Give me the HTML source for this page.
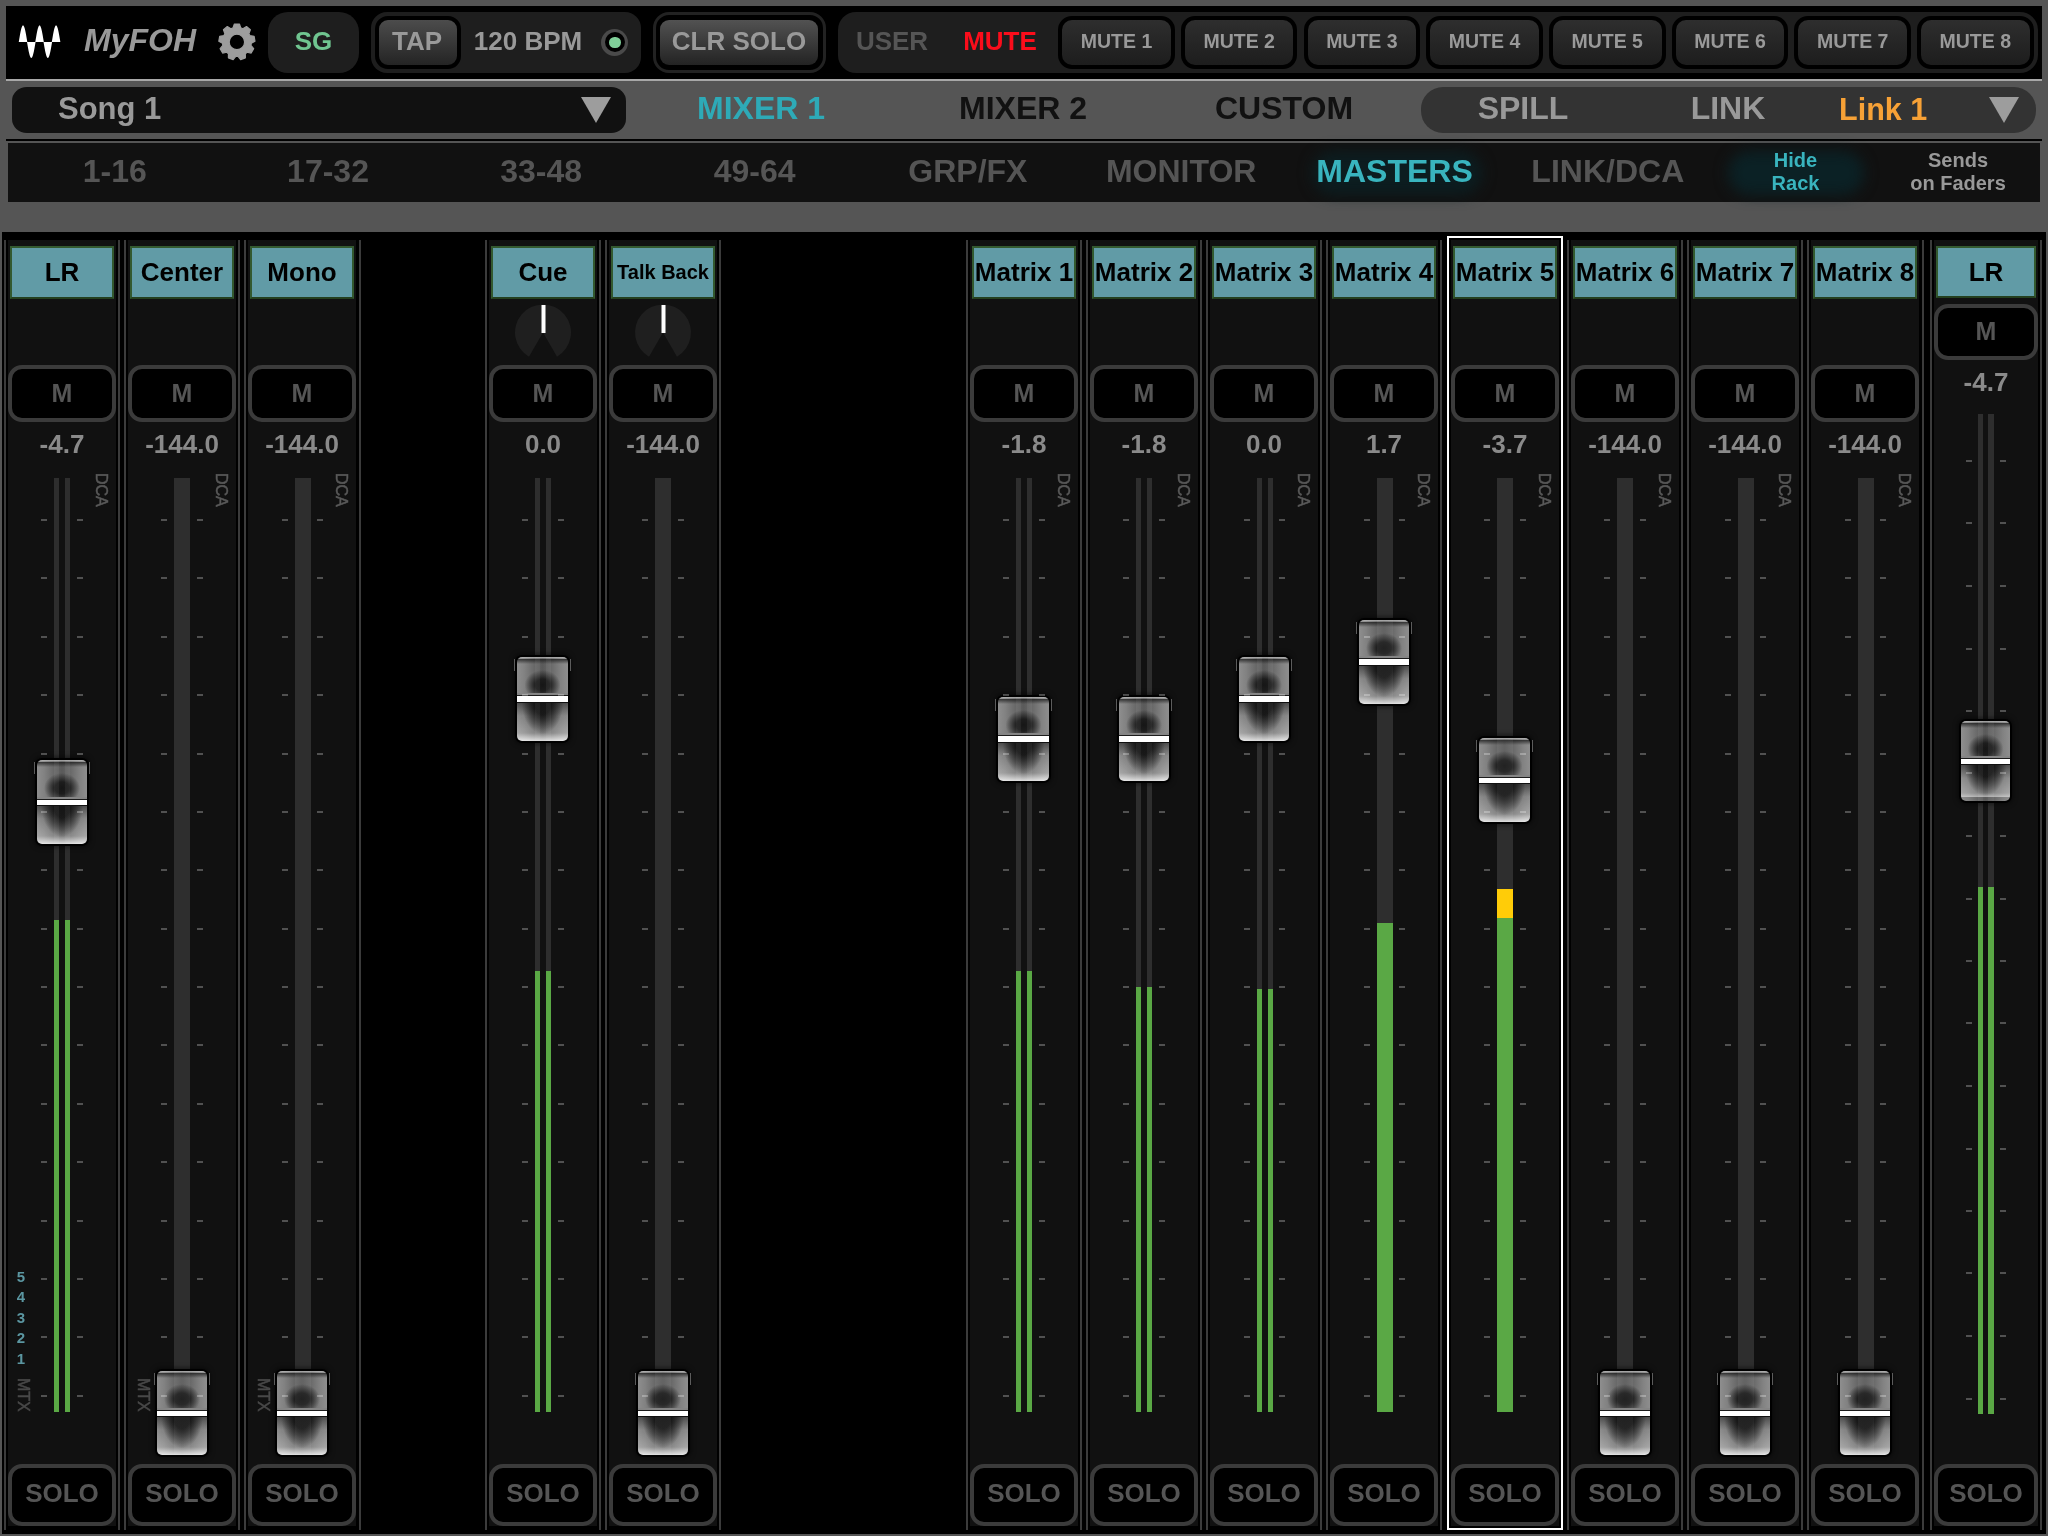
<!DOCTYPE html>
<html><head><meta charset="utf-8"><title>MyFOH</title>
<style>
html,body{margin:0;padding:0;overflow:hidden;}
html{width:2048px;height:1536px;background:#555555;}
body{width:2048px;height:1536px;background:#555555;position:relative;overflow:hidden;
 font-family:"Liberation Sans",sans-serif;font-weight:bold;}
div{position:absolute;box-sizing:border-box;}
svg{position:absolute;overflow:visible;}
.t{text-align:center;white-space:nowrap;}
.ln{background:#3b3b3b;width:2px;top:240px;height:1290px;}
.bg{background:#111111;top:240px;height:1286px;}
.lab{background:#619ba6;border:2px solid #33592f;border-bottom-color:#24401f;color:#000;text-align:center;
 height:53px;top:246px;line-height:49px;font-size:26px;white-space:nowrap;overflow:hidden;}
.btn{background:#000;border:4px solid #3b3b3b;border-radius:14px;color:#555;text-align:center;font-size:25px;}
.val{color:#8a8a8a;font-size:26px;text-align:center;height:30px;line-height:30px;}
.tk{background:rgba(255,255,255,.27);width:6px;height:2px;}
.tr{background:#2e2e2e;}
.gr{background:#5aa845;}
.yl{background:#ffcc08;}
.dca{color:#595959;font-size:16px;font-weight:normal;-webkit-text-stroke:.5px #595959;transform:rotate(90deg);transform-origin:0 0;
 white-space:nowrap;height:18px;line-height:18px;}
.num{color:#5b96a1;font-size:15px;text-align:center;width:20px;height:18px;line-height:18px;}
.knob{width:50px;height:84px;border-radius:5px;
 box-shadow:0 0 0 2px #000,0 0 5px 3px rgba(0,0,0,.55);
 background:
  linear-gradient(to bottom,rgba(190,190,190,.9),rgba(60,60,60,.0)) 0 0/100% 2px no-repeat,
  linear-gradient(to bottom,rgba(20,20,20,.75),rgba(20,20,20,0)) 0 2px/100% 5px no-repeat,
  radial-gradient(ellipse 18px 15px at 50% 28px,rgba(22,22,22,1) 0%,rgba(22,22,22,.9) 40%,rgba(22,22,22,0) 100%) 0 0/100% 37px no-repeat,
  linear-gradient(to bottom,rgba(20,20,20,.55),rgba(20,20,20,0)) 0 45px/100% 14px no-repeat,
  radial-gradient(ellipse 21px 32px at 50% 0px,rgba(22,22,22,1) 0%,rgba(22,22,22,.95) 40%,rgba(22,22,22,0) 100%) 0 45px/100% 39px no-repeat,
  linear-gradient(to bottom,rgba(255,255,255,0) 0,rgba(255,255,255,0) 60px,rgba(255,255,255,.22) 76px,rgba(255,255,255,.8) 84px),
  linear-gradient(to right,#8e8e8e 0,#828282 14%,#686868 34%,#5a5a5a 50%,#686868 66%,#828282 86%,#8e8e8e 100%);
}
.bd{top:0;height:100%;background:rgba(255,255,255,.055);}
.kl{left:0;width:100%;background:#fff;box-shadow:0 -1px 0 #1c1c1c,0 -3px 0 #858585,0 1px 0 #111;}
.ear{background:#5c5c5c;width:1px;height:12px;}
</style></head>
<body>
<div id="root" style="left:0;top:0;width:2048px;height:1536px;overflow:hidden;will-change:transform;">

<div style="left:6px;top:6px;width:2036px;height:73px;background:#000;"></div>
<div style="left:6px;top:79px;width:2036px;height:2px;background:#a8a8a8;"></div>
<svg style="left:0;top:0" width="80" height="80" viewBox="0 0 80 80"><path d="M18.75 42.05 L19.18 39.45 L19.61 36.90 L20.03 34.49 L20.46 32.26 L20.89 30.28 L21.32 28.58 L21.75 27.21 L22.17 26.21 L22.60 25.60 L23.03 25.40 L23.46 25.60 L23.89 26.21 L24.31 27.21 L24.74 28.58 L25.17 30.28 L25.60 32.26 L26.03 34.49 L26.45 36.90 L26.88 39.45 L27.31 42.05ZM27.01 41.95 L27.44 44.46 L27.87 46.91 L28.29 49.24 L28.72 51.38 L29.15 53.30 L29.58 54.93 L30.01 56.25 L30.43 57.21 L30.86 57.80 L31.29 58.00 L31.72 57.80 L32.15 57.21 L32.57 56.25 L33.00 54.93 L33.43 53.30 L33.86 51.38 L34.29 49.24 L34.71 46.91 L35.14 44.46 L35.57 41.95ZM35.27 42.05 L35.70 39.45 L36.13 36.90 L36.55 34.49 L36.98 32.26 L37.41 30.28 L37.84 28.58 L38.27 27.21 L38.69 26.21 L39.12 25.60 L39.55 25.40 L39.98 25.60 L40.41 26.21 L40.83 27.21 L41.26 28.58 L41.69 30.28 L42.12 32.26 L42.55 34.49 L42.97 36.90 L43.40 39.45 L43.83 42.05ZM43.53 41.95 L43.96 44.46 L44.39 46.91 L44.81 49.24 L45.24 51.38 L45.67 53.30 L46.10 54.93 L46.53 56.25 L46.95 57.21 L47.38 57.80 L47.81 58.00 L48.24 57.80 L48.67 57.21 L49.09 56.25 L49.52 54.93 L49.95 53.30 L50.38 51.38 L50.81 49.24 L51.23 46.91 L51.66 44.46 L52.09 41.95ZM51.79 42.05 L52.22 39.45 L52.65 36.90 L53.07 34.49 L53.50 32.26 L53.93 30.28 L54.36 28.58 L54.79 27.21 L55.21 26.21 L55.64 25.60 L56.07 25.40 L56.50 25.60 L56.93 26.21 L57.35 27.21 L57.78 28.58 L58.21 30.28 L58.64 32.26 L59.07 34.49 L59.49 36.90 L59.92 39.45 L60.35 42.05Z" fill="#fff"/></svg>
<div style="left:84px;top:20px;height:40px;line-height:40px;font-size:32px;font-style:italic;color:#999;white-space:nowrap;">MyFOH</div>
<svg style="left:0;top:0" width="300" height="80"><path d="M233.00 27.93 L234.38 23.98 L239.42 23.98 L240.80 27.93 L242.89 28.70 L246.49 26.55 L250.35 29.79 L248.86 33.71 L249.98 35.63 L254.11 36.31 L254.99 41.27 L251.33 43.31 L250.94 45.51 L253.68 48.68 L251.16 53.04 L247.05 52.26 L245.34 53.69 L245.40 57.88 L240.66 59.60 L238.01 56.36 L235.79 56.36 L233.14 59.60 L228.40 57.88 L228.46 53.69 L226.75 52.26 L222.64 53.04 L220.12 48.68 L222.86 45.51 L222.47 43.31 L218.81 41.27 L219.69 36.31 L223.82 35.63 L224.94 33.71 L223.45 29.79 L227.31 26.55 L230.91 28.70Z M229.20 41.90 a7.7 7.7 0 1 0 15.4 0 a7.7 7.7 0 1 0 -15.4 0Z" fill="#9d9d9d" fill-rule="evenodd" stroke="#9d9d9d" stroke-width="1.2" stroke-linejoin="round"/></svg>
<div style="left:268px;top:12px;width:91px;height:61px;background:#1e1e1e;border-radius:20px;"></div>
<div class="t" style="left:113.5px;top:23.0px;width:400px;height:36px;line-height:36px;font-size:26px;color:#70c590;">SG</div>
<div style="left:371px;top:12px;width:270px;height:61px;background:#1e1e1e;border-radius:16px;"></div>
<div style="left:375px;top:16px;width:86px;height:53px;background:linear-gradient(#4c4c4c,#242424);border:4px solid #000;border-radius:13px;"></div>
<div class="t" style="left:217.0px;top:23.0px;width:400px;height:36px;line-height:36px;font-size:26px;color:#999;">TAP</div>
<div class="t" style="left:328.0px;top:23.0px;width:400px;height:36px;line-height:36px;font-size:26px;color:#999;">120 BPM</div>
<div style="left:601.4px;top:28.7px;width:27px;height:27px;border-radius:50%;background:#4a4a4a;"></div>
<div style="left:604.9px;top:32.2px;width:20px;height:20px;border-radius:50%;background:#000;"></div>
<div style="left:609.2px;top:36.5px;width:11.4px;height:11.4px;border-radius:50%;background:#80cf99;"></div>
<div style="left:653px;top:12px;width:173px;height:61px;border:3px solid #222;border-radius:16px;background:#000;"></div>
<div style="left:660px;top:20px;width:158px;height:45px;background:linear-gradient(#525252,#232323);border-radius:9px;"></div>
<div class="t" style="left:539.0px;top:23.0px;width:400px;height:36px;line-height:36px;font-size:26px;color:#999;">CLR SOLO</div>
<div style="left:838px;top:12px;width:1200px;height:61px;background:#1e1e1e;border-radius:18px;"></div>
<div class="t" style="left:692.0px;top:23.0px;width:400px;height:36px;line-height:36px;font-size:26px;color:#555;">USER</div>
<div class="t" style="left:800.0px;top:23.0px;width:400px;height:36px;line-height:36px;font-size:26px;color:#fb0d1b;">MUTE</div>
<div style="left:1058.2px;top:16px;width:116.5px;height:53px;background:linear-gradient(#2e2e2e,#1d1d1d);border:4px solid #000;border-radius:14px;"></div>
<div class="t" style="left:1058.5px;top:28.0px;width:116px;height:27px;line-height:27px;font-size:19.5px;color:#999;">MUTE 1</div>
<div style="left:1180.9px;top:16px;width:116.5px;height:53px;background:linear-gradient(#2e2e2e,#1d1d1d);border:4px solid #000;border-radius:14px;"></div>
<div class="t" style="left:1181.2px;top:28.0px;width:116px;height:27px;line-height:27px;font-size:19.5px;color:#999;">MUTE 2</div>
<div style="left:1303.6px;top:16px;width:116.5px;height:53px;background:linear-gradient(#2e2e2e,#1d1d1d);border:4px solid #000;border-radius:14px;"></div>
<div class="t" style="left:1303.9px;top:28.0px;width:116px;height:27px;line-height:27px;font-size:19.5px;color:#999;">MUTE 3</div>
<div style="left:1426.3px;top:16px;width:116.5px;height:53px;background:linear-gradient(#2e2e2e,#1d1d1d);border:4px solid #000;border-radius:14px;"></div>
<div class="t" style="left:1426.6px;top:28.0px;width:116px;height:27px;line-height:27px;font-size:19.5px;color:#999;">MUTE 4</div>
<div style="left:1549.0px;top:16px;width:116.5px;height:53px;background:linear-gradient(#2e2e2e,#1d1d1d);border:4px solid #000;border-radius:14px;"></div>
<div class="t" style="left:1549.2px;top:28.0px;width:116px;height:27px;line-height:27px;font-size:19.5px;color:#999;">MUTE 5</div>
<div style="left:1671.7px;top:16px;width:116.5px;height:53px;background:linear-gradient(#2e2e2e,#1d1d1d);border:4px solid #000;border-radius:14px;"></div>
<div class="t" style="left:1672.0px;top:28.0px;width:116px;height:27px;line-height:27px;font-size:19.5px;color:#999;">MUTE 6</div>
<div style="left:1794.4px;top:16px;width:116.5px;height:53px;background:linear-gradient(#2e2e2e,#1d1d1d);border:4px solid #000;border-radius:14px;"></div>
<div class="t" style="left:1794.7px;top:28.0px;width:116px;height:27px;line-height:27px;font-size:19.5px;color:#999;">MUTE 7</div>
<div style="left:1917.1px;top:16px;width:116.5px;height:53px;background:linear-gradient(#2e2e2e,#1d1d1d);border:4px solid #000;border-radius:14px;"></div>
<div class="t" style="left:1917.3px;top:28.0px;width:116px;height:27px;line-height:27px;font-size:19.5px;color:#999;">MUTE 8</div>
<div style="left:12px;top:87px;width:614px;height:46px;background:#111;border-radius:15px/14px;"></div>
<div style="left:58px;top:88px;height:42px;line-height:42px;font-size:31px;color:#999;white-space:nowrap;">Song 1</div>
<div class="t" style="left:561.0px;top:86.0px;width:400px;height:44px;line-height:44px;font-size:32px;color:#2eaab7;">MIXER 1</div>
<div class="t" style="left:823.0px;top:86.0px;width:400px;height:44px;line-height:44px;font-size:32px;color:#111;">MIXER 2</div>
<div class="t" style="left:1084.0px;top:86.0px;width:400px;height:44px;line-height:44px;font-size:32px;color:#111;">CUSTOM</div>
<div style="left:1421px;top:87px;width:615px;height:46px;background:#333;border-radius:22px;"></div>
<div class="t" style="left:1323.0px;top:86.0px;width:400px;height:44px;line-height:44px;font-size:32px;color:#999;">SPILL</div>
<div class="t" style="left:1528.0px;top:86.0px;width:400px;height:44px;line-height:44px;font-size:32px;color:#999;">LINK</div>
<div class="t" style="left:1683.2px;top:87.5px;width:400px;height:42px;line-height:42px;font-size:30.5px;color:#f7a136;">Link 1</div>
<svg style="left:0;top:0" width="2048" height="140"><path d="M581 97 L611 97 L596 123Z" fill="#9d9d9d"/><path d="M1989 97 L2019 97 L2004 123Z" fill="#9d9d9d"/></svg>
<div style="left:6px;top:139px;width:2036px;height:2px;background:#000;"></div>
<div style="left:8px;top:143px;width:2032px;height:59px;background:#111;"></div>
<div style="left:1312px;top:151px;width:170px;height:44px;border-radius:22px;background:#0c1d20;filter:blur(7px);"></div>
<div style="left:1728px;top:151px;width:136px;height:44px;border-radius:22px;background:#0b2125;filter:blur(7px);"></div>
<div class="t" style="left:-85.3px;top:148.5px;width:400px;height:44px;line-height:44px;font-size:32px;color:#555;">1-16</div>
<div class="t" style="left:128.0px;top:148.5px;width:400px;height:44px;line-height:44px;font-size:32px;color:#555;">17-32</div>
<div class="t" style="left:341.20000000000005px;top:148.5px;width:400px;height:44px;line-height:44px;font-size:32px;color:#555;">33-48</div>
<div class="t" style="left:554.6px;top:148.5px;width:400px;height:44px;line-height:44px;font-size:32px;color:#555;">49-64</div>
<div class="t" style="left:767.9px;top:148.5px;width:400px;height:44px;line-height:44px;font-size:32px;color:#555;">GRP/FX</div>
<div class="t" style="left:981.2px;top:148.5px;width:400px;height:44px;line-height:44px;font-size:32px;color:#555;">MONITOR</div>
<div class="t" style="left:1194.5px;top:148.5px;width:400px;height:44px;line-height:44px;font-size:32px;color:#39b4be;">MASTERS</div>
<div class="t" style="left:1407.8px;top:148.5px;width:400px;height:44px;line-height:44px;font-size:32px;color:#555;">LINK/DCA</div>
<div class="t" style="left:1715.5px;top:145.5px;width:160px;height:28px;line-height:28px;font-size:20px;color:#39b4be;">Hide</div>
<div class="t" style="left:1715.5px;top:169.0px;width:160px;height:28px;line-height:28px;font-size:20px;color:#39b4be;">Rack</div>
<div class="t" style="left:1878.0px;top:145.5px;width:160px;height:28px;line-height:28px;font-size:20px;color:#999;">Sends</div>
<div class="t" style="left:1878.0px;top:169.0px;width:160px;height:28px;line-height:28px;font-size:20px;color:#999;">on Faders</div>
<div style="left:2px;top:232px;width:2044px;height:1302px;background:#000;"></div>
<div class="ln" style="left:4px"></div>
<div class="bg" style="left:8px;width:108px"></div>
<div class="ln" style="left:118px"></div>
<div class="lab" style="left:10px;width:104px;font-size:26px">LR</div>
<div class="btn" style="left:8px;top:365px;width:108px;height:57px;line-height:48px;">M</div>
<div class="val" style="left:8px;top:429px;width:108px;">-4.7</div>
<div class="tr" style="left:54px;top:478px;width:5px;height:934px"></div>
<div class="gr" style="left:54px;top:920px;width:5px;height:492px"></div>
<div class="tr" style="left:65px;top:478px;width:5px;height:934px"></div>
<div class="gr" style="left:65px;top:920px;width:5px;height:492px"></div>
<div class="knob" style="left:37px;top:760px;width:50px"><div class="bd" style="left:17px;width:5px"></div><div class="bd" style="left:28px;width:5px"></div><div class="kl" style="top:40px;height:5px"></div></div>
<div class="ear" style="left:34px;top:762px"></div>
<div class="ear" style="left:89px;top:762px"></div>
<div class="tk" style="left:41px;top:519px"></div>
<div class="tk" style="left:77px;top:519px"></div>
<div class="tk" style="left:41px;top:577px"></div>
<div class="tk" style="left:77px;top:577px"></div>
<div class="tk" style="left:41px;top:636px"></div>
<div class="tk" style="left:77px;top:636px"></div>
<div class="tk" style="left:41px;top:694px"></div>
<div class="tk" style="left:77px;top:694px"></div>
<div class="tk" style="left:41px;top:753px"></div>
<div class="tk" style="left:77px;top:753px"></div>
<div class="tk" style="left:41px;top:811px"></div>
<div class="tk" style="left:77px;top:811px"></div>
<div class="tk" style="left:41px;top:869px"></div>
<div class="tk" style="left:77px;top:869px"></div>
<div class="tk" style="left:41px;top:928px"></div>
<div class="tk" style="left:77px;top:928px"></div>
<div class="tk" style="left:41px;top:986px"></div>
<div class="tk" style="left:77px;top:986px"></div>
<div class="tk" style="left:41px;top:1044px"></div>
<div class="tk" style="left:77px;top:1044px"></div>
<div class="tk" style="left:41px;top:1103px"></div>
<div class="tk" style="left:77px;top:1103px"></div>
<div class="tk" style="left:41px;top:1161px"></div>
<div class="tk" style="left:77px;top:1161px"></div>
<div class="tk" style="left:41px;top:1220px"></div>
<div class="tk" style="left:77px;top:1220px"></div>
<div class="tk" style="left:41px;top:1278px"></div>
<div class="tk" style="left:77px;top:1278px"></div>
<div class="tk" style="left:41px;top:1336px"></div>
<div class="tk" style="left:77px;top:1336px"></div>
<div class="tk" style="left:41px;top:1395px"></div>
<div class="tk" style="left:77px;top:1395px"></div>
<div class="dca" style="left:110px;top:473px">DCA</div>
<div class="dca" style="left:32px;top:1378px;color:#484848;-webkit-text-stroke-color:#484848">MTX</div>
<div class="num" style="left:11px;top:1268px">5</div>
<div class="num" style="left:11px;top:1288px">4</div>
<div class="num" style="left:11px;top:1309px">3</div>
<div class="num" style="left:11px;top:1329px">2</div>
<div class="num" style="left:11px;top:1350px">1</div>
<div class="btn" style="left:8px;top:1464px;width:108px;height:62px;line-height:51px;font-size:26px">SOLO</div>
<div class="ln" style="left:124px"></div>
<div class="bg" style="left:128px;width:108px"></div>
<div class="ln" style="left:238px"></div>
<div class="lab" style="left:130px;width:104px;font-size:26px">Center</div>
<div class="btn" style="left:128px;top:365px;width:108px;height:57px;line-height:48px;">M</div>
<div class="val" style="left:128px;top:429px;width:108px;">-144.0</div>
<div class="tr" style="left:174px;top:478px;width:16px;height:934px"></div>
<div class="knob" style="left:157px;top:1371px;width:50px"><div class="bd" style="left:17px;width:16px"></div><div class="kl" style="top:40px;height:5px"></div></div>
<div class="ear" style="left:154px;top:1373px"></div>
<div class="ear" style="left:209px;top:1373px"></div>
<div class="tk" style="left:161px;top:519px"></div>
<div class="tk" style="left:197px;top:519px"></div>
<div class="tk" style="left:161px;top:577px"></div>
<div class="tk" style="left:197px;top:577px"></div>
<div class="tk" style="left:161px;top:636px"></div>
<div class="tk" style="left:197px;top:636px"></div>
<div class="tk" style="left:161px;top:694px"></div>
<div class="tk" style="left:197px;top:694px"></div>
<div class="tk" style="left:161px;top:753px"></div>
<div class="tk" style="left:197px;top:753px"></div>
<div class="tk" style="left:161px;top:811px"></div>
<div class="tk" style="left:197px;top:811px"></div>
<div class="tk" style="left:161px;top:869px"></div>
<div class="tk" style="left:197px;top:869px"></div>
<div class="tk" style="left:161px;top:928px"></div>
<div class="tk" style="left:197px;top:928px"></div>
<div class="tk" style="left:161px;top:986px"></div>
<div class="tk" style="left:197px;top:986px"></div>
<div class="tk" style="left:161px;top:1044px"></div>
<div class="tk" style="left:197px;top:1044px"></div>
<div class="tk" style="left:161px;top:1103px"></div>
<div class="tk" style="left:197px;top:1103px"></div>
<div class="tk" style="left:161px;top:1161px"></div>
<div class="tk" style="left:197px;top:1161px"></div>
<div class="tk" style="left:161px;top:1220px"></div>
<div class="tk" style="left:197px;top:1220px"></div>
<div class="tk" style="left:161px;top:1278px"></div>
<div class="tk" style="left:197px;top:1278px"></div>
<div class="tk" style="left:161px;top:1336px"></div>
<div class="tk" style="left:197px;top:1336px"></div>
<div class="tk" style="left:161px;top:1395px"></div>
<div class="tk" style="left:197px;top:1395px"></div>
<div class="dca" style="left:230px;top:473px">DCA</div>
<div class="dca" style="left:152px;top:1378px;color:#484848;-webkit-text-stroke-color:#484848">MTX</div>
<div class="btn" style="left:128px;top:1464px;width:108px;height:62px;line-height:51px;font-size:26px">SOLO</div>
<div class="ln" style="left:244px"></div>
<div class="bg" style="left:248px;width:108px"></div>
<div class="ln" style="left:359px"></div>
<div class="lab" style="left:250px;width:104px;font-size:26px">Mono</div>
<div class="btn" style="left:248px;top:365px;width:108px;height:57px;line-height:48px;">M</div>
<div class="val" style="left:248px;top:429px;width:108px;">-144.0</div>
<div class="tr" style="left:295px;top:478px;width:16px;height:934px"></div>
<div class="knob" style="left:277px;top:1371px;width:50px"><div class="bd" style="left:18px;width:16px"></div><div class="kl" style="top:40px;height:5px"></div></div>
<div class="ear" style="left:274px;top:1373px"></div>
<div class="ear" style="left:329px;top:1373px"></div>
<div class="tk" style="left:282px;top:519px"></div>
<div class="tk" style="left:317px;top:519px"></div>
<div class="tk" style="left:282px;top:577px"></div>
<div class="tk" style="left:317px;top:577px"></div>
<div class="tk" style="left:282px;top:636px"></div>
<div class="tk" style="left:317px;top:636px"></div>
<div class="tk" style="left:282px;top:694px"></div>
<div class="tk" style="left:317px;top:694px"></div>
<div class="tk" style="left:282px;top:753px"></div>
<div class="tk" style="left:317px;top:753px"></div>
<div class="tk" style="left:282px;top:811px"></div>
<div class="tk" style="left:317px;top:811px"></div>
<div class="tk" style="left:282px;top:869px"></div>
<div class="tk" style="left:317px;top:869px"></div>
<div class="tk" style="left:282px;top:928px"></div>
<div class="tk" style="left:317px;top:928px"></div>
<div class="tk" style="left:282px;top:986px"></div>
<div class="tk" style="left:317px;top:986px"></div>
<div class="tk" style="left:282px;top:1044px"></div>
<div class="tk" style="left:317px;top:1044px"></div>
<div class="tk" style="left:282px;top:1103px"></div>
<div class="tk" style="left:317px;top:1103px"></div>
<div class="tk" style="left:282px;top:1161px"></div>
<div class="tk" style="left:317px;top:1161px"></div>
<div class="tk" style="left:282px;top:1220px"></div>
<div class="tk" style="left:317px;top:1220px"></div>
<div class="tk" style="left:282px;top:1278px"></div>
<div class="tk" style="left:317px;top:1278px"></div>
<div class="tk" style="left:282px;top:1336px"></div>
<div class="tk" style="left:317px;top:1336px"></div>
<div class="tk" style="left:282px;top:1395px"></div>
<div class="tk" style="left:317px;top:1395px"></div>
<div class="dca" style="left:350px;top:473px">DCA</div>
<div class="dca" style="left:272px;top:1378px;color:#484848;-webkit-text-stroke-color:#484848">MTX</div>
<div class="btn" style="left:248px;top:1464px;width:108px;height:62px;line-height:51px;font-size:26px">SOLO</div>
<div class="ln" style="left:485px"></div>
<div class="bg" style="left:489px;width:108px"></div>
<div class="ln" style="left:599px"></div>
<div class="lab" style="left:491px;width:104px;font-size:26px">Cue</div>
<svg style="left:513px;top:302px" width="60" height="62" viewBox="-30 -30.5 60 62"><path d="M0 0 L-14 24.2 A28 28 0 1 1 14 24.2Z" fill="#1f1f1f"/><rect x="-1.5" y="-27.5" width="4" height="28" fill="#fff"/></svg>
<div class="btn" style="left:489px;top:365px;width:108px;height:57px;line-height:48px;">M</div>
<div class="val" style="left:489px;top:429px;width:108px;">0.0</div>
<div class="tr" style="left:535px;top:478px;width:5px;height:934px"></div>
<div class="gr" style="left:535px;top:971px;width:5px;height:441px"></div>
<div class="tr" style="left:546px;top:478px;width:5px;height:934px"></div>
<div class="gr" style="left:546px;top:971px;width:5px;height:441px"></div>
<div class="knob" style="left:517px;top:657px;width:51px"><div class="bd" style="left:18px;width:5px"></div><div class="bd" style="left:29px;width:5px"></div><div class="kl" style="top:39px;height:6px"></div></div>
<div class="ear" style="left:514px;top:659px"></div>
<div class="ear" style="left:570px;top:659px"></div>
<div class="tk" style="left:522px;top:519px"></div>
<div class="tk" style="left:558px;top:519px"></div>
<div class="tk" style="left:522px;top:577px"></div>
<div class="tk" style="left:558px;top:577px"></div>
<div class="tk" style="left:522px;top:636px"></div>
<div class="tk" style="left:558px;top:636px"></div>
<div class="tk" style="left:522px;top:694px"></div>
<div class="tk" style="left:558px;top:694px"></div>
<div class="tk" style="left:522px;top:753px"></div>
<div class="tk" style="left:558px;top:753px"></div>
<div class="tk" style="left:522px;top:811px"></div>
<div class="tk" style="left:558px;top:811px"></div>
<div class="tk" style="left:522px;top:869px"></div>
<div class="tk" style="left:558px;top:869px"></div>
<div class="tk" style="left:522px;top:928px"></div>
<div class="tk" style="left:558px;top:928px"></div>
<div class="tk" style="left:522px;top:986px"></div>
<div class="tk" style="left:558px;top:986px"></div>
<div class="tk" style="left:522px;top:1044px"></div>
<div class="tk" style="left:558px;top:1044px"></div>
<div class="tk" style="left:522px;top:1103px"></div>
<div class="tk" style="left:558px;top:1103px"></div>
<div class="tk" style="left:522px;top:1161px"></div>
<div class="tk" style="left:558px;top:1161px"></div>
<div class="tk" style="left:522px;top:1220px"></div>
<div class="tk" style="left:558px;top:1220px"></div>
<div class="tk" style="left:522px;top:1278px"></div>
<div class="tk" style="left:558px;top:1278px"></div>
<div class="tk" style="left:522px;top:1336px"></div>
<div class="tk" style="left:558px;top:1336px"></div>
<div class="tk" style="left:522px;top:1395px"></div>
<div class="tk" style="left:558px;top:1395px"></div>
<div class="btn" style="left:489px;top:1464px;width:108px;height:62px;line-height:51px;font-size:26px">SOLO</div>
<div class="ln" style="left:605px"></div>
<div class="bg" style="left:609px;width:108px"></div>
<div class="ln" style="left:719px"></div>
<div class="lab" style="left:611px;width:104px;font-size:20px">Talk Back</div>
<svg style="left:633px;top:302px" width="60" height="62" viewBox="-30 -30.5 60 62"><path d="M0 0 L-14 24.2 A28 28 0 1 1 14 24.2Z" fill="#1f1f1f"/><rect x="-1.5" y="-27.5" width="4" height="28" fill="#fff"/></svg>
<div class="btn" style="left:609px;top:365px;width:108px;height:57px;line-height:48px;">M</div>
<div class="val" style="left:609px;top:429px;width:108px;">-144.0</div>
<div class="tr" style="left:655px;top:478px;width:16px;height:934px"></div>
<div class="knob" style="left:638px;top:1371px;width:50px"><div class="bd" style="left:17px;width:16px"></div><div class="kl" style="top:40px;height:5px"></div></div>
<div class="ear" style="left:635px;top:1373px"></div>
<div class="ear" style="left:690px;top:1373px"></div>
<div class="tk" style="left:642px;top:519px"></div>
<div class="tk" style="left:678px;top:519px"></div>
<div class="tk" style="left:642px;top:577px"></div>
<div class="tk" style="left:678px;top:577px"></div>
<div class="tk" style="left:642px;top:636px"></div>
<div class="tk" style="left:678px;top:636px"></div>
<div class="tk" style="left:642px;top:694px"></div>
<div class="tk" style="left:678px;top:694px"></div>
<div class="tk" style="left:642px;top:753px"></div>
<div class="tk" style="left:678px;top:753px"></div>
<div class="tk" style="left:642px;top:811px"></div>
<div class="tk" style="left:678px;top:811px"></div>
<div class="tk" style="left:642px;top:869px"></div>
<div class="tk" style="left:678px;top:869px"></div>
<div class="tk" style="left:642px;top:928px"></div>
<div class="tk" style="left:678px;top:928px"></div>
<div class="tk" style="left:642px;top:986px"></div>
<div class="tk" style="left:678px;top:986px"></div>
<div class="tk" style="left:642px;top:1044px"></div>
<div class="tk" style="left:678px;top:1044px"></div>
<div class="tk" style="left:642px;top:1103px"></div>
<div class="tk" style="left:678px;top:1103px"></div>
<div class="tk" style="left:642px;top:1161px"></div>
<div class="tk" style="left:678px;top:1161px"></div>
<div class="tk" style="left:642px;top:1220px"></div>
<div class="tk" style="left:678px;top:1220px"></div>
<div class="tk" style="left:642px;top:1278px"></div>
<div class="tk" style="left:678px;top:1278px"></div>
<div class="tk" style="left:642px;top:1336px"></div>
<div class="tk" style="left:678px;top:1336px"></div>
<div class="tk" style="left:642px;top:1395px"></div>
<div class="tk" style="left:678px;top:1395px"></div>
<div class="btn" style="left:609px;top:1464px;width:108px;height:62px;line-height:51px;font-size:26px">SOLO</div>
<div class="ln" style="left:966px"></div>
<div class="bg" style="left:970px;width:108px"></div>
<div class="ln" style="left:1080px"></div>
<div class="lab" style="left:972px;width:104px;font-size:26px">Matrix 1</div>
<div class="btn" style="left:970px;top:365px;width:108px;height:57px;line-height:48px;">M</div>
<div class="val" style="left:970px;top:429px;width:108px;">-1.8</div>
<div class="tr" style="left:1016px;top:478px;width:5px;height:934px"></div>
<div class="gr" style="left:1016px;top:971px;width:5px;height:441px"></div>
<div class="tr" style="left:1027px;top:478px;width:5px;height:934px"></div>
<div class="gr" style="left:1027px;top:971px;width:5px;height:441px"></div>
<div class="knob" style="left:998px;top:697px;width:51px"><div class="bd" style="left:18px;width:5px"></div><div class="bd" style="left:29px;width:5px"></div><div class="kl" style="top:39px;height:6px"></div></div>
<div class="ear" style="left:995px;top:699px"></div>
<div class="ear" style="left:1051px;top:699px"></div>
<div class="tk" style="left:1003px;top:519px"></div>
<div class="tk" style="left:1039px;top:519px"></div>
<div class="tk" style="left:1003px;top:577px"></div>
<div class="tk" style="left:1039px;top:577px"></div>
<div class="tk" style="left:1003px;top:636px"></div>
<div class="tk" style="left:1039px;top:636px"></div>
<div class="tk" style="left:1003px;top:694px"></div>
<div class="tk" style="left:1039px;top:694px"></div>
<div class="tk" style="left:1003px;top:753px"></div>
<div class="tk" style="left:1039px;top:753px"></div>
<div class="tk" style="left:1003px;top:811px"></div>
<div class="tk" style="left:1039px;top:811px"></div>
<div class="tk" style="left:1003px;top:869px"></div>
<div class="tk" style="left:1039px;top:869px"></div>
<div class="tk" style="left:1003px;top:928px"></div>
<div class="tk" style="left:1039px;top:928px"></div>
<div class="tk" style="left:1003px;top:986px"></div>
<div class="tk" style="left:1039px;top:986px"></div>
<div class="tk" style="left:1003px;top:1044px"></div>
<div class="tk" style="left:1039px;top:1044px"></div>
<div class="tk" style="left:1003px;top:1103px"></div>
<div class="tk" style="left:1039px;top:1103px"></div>
<div class="tk" style="left:1003px;top:1161px"></div>
<div class="tk" style="left:1039px;top:1161px"></div>
<div class="tk" style="left:1003px;top:1220px"></div>
<div class="tk" style="left:1039px;top:1220px"></div>
<div class="tk" style="left:1003px;top:1278px"></div>
<div class="tk" style="left:1039px;top:1278px"></div>
<div class="tk" style="left:1003px;top:1336px"></div>
<div class="tk" style="left:1039px;top:1336px"></div>
<div class="tk" style="left:1003px;top:1395px"></div>
<div class="tk" style="left:1039px;top:1395px"></div>
<div class="dca" style="left:1072px;top:473px">DCA</div>
<div class="btn" style="left:970px;top:1464px;width:108px;height:62px;line-height:51px;font-size:26px">SOLO</div>
<div class="ln" style="left:1086px"></div>
<div class="bg" style="left:1090px;width:108px"></div>
<div class="ln" style="left:1200px"></div>
<div class="lab" style="left:1092px;width:104px;font-size:26px">Matrix 2</div>
<div class="btn" style="left:1090px;top:365px;width:108px;height:57px;line-height:48px;">M</div>
<div class="val" style="left:1090px;top:429px;width:108px;">-1.8</div>
<div class="tr" style="left:1136px;top:478px;width:5px;height:934px"></div>
<div class="gr" style="left:1136px;top:987px;width:5px;height:425px"></div>
<div class="tr" style="left:1147px;top:478px;width:5px;height:934px"></div>
<div class="gr" style="left:1147px;top:987px;width:5px;height:425px"></div>
<div class="knob" style="left:1119px;top:697px;width:50px"><div class="bd" style="left:17px;width:5px"></div><div class="bd" style="left:28px;width:5px"></div><div class="kl" style="top:39px;height:6px"></div></div>
<div class="ear" style="left:1116px;top:699px"></div>
<div class="ear" style="left:1171px;top:699px"></div>
<div class="tk" style="left:1123px;top:519px"></div>
<div class="tk" style="left:1159px;top:519px"></div>
<div class="tk" style="left:1123px;top:577px"></div>
<div class="tk" style="left:1159px;top:577px"></div>
<div class="tk" style="left:1123px;top:636px"></div>
<div class="tk" style="left:1159px;top:636px"></div>
<div class="tk" style="left:1123px;top:694px"></div>
<div class="tk" style="left:1159px;top:694px"></div>
<div class="tk" style="left:1123px;top:753px"></div>
<div class="tk" style="left:1159px;top:753px"></div>
<div class="tk" style="left:1123px;top:811px"></div>
<div class="tk" style="left:1159px;top:811px"></div>
<div class="tk" style="left:1123px;top:869px"></div>
<div class="tk" style="left:1159px;top:869px"></div>
<div class="tk" style="left:1123px;top:928px"></div>
<div class="tk" style="left:1159px;top:928px"></div>
<div class="tk" style="left:1123px;top:986px"></div>
<div class="tk" style="left:1159px;top:986px"></div>
<div class="tk" style="left:1123px;top:1044px"></div>
<div class="tk" style="left:1159px;top:1044px"></div>
<div class="tk" style="left:1123px;top:1103px"></div>
<div class="tk" style="left:1159px;top:1103px"></div>
<div class="tk" style="left:1123px;top:1161px"></div>
<div class="tk" style="left:1159px;top:1161px"></div>
<div class="tk" style="left:1123px;top:1220px"></div>
<div class="tk" style="left:1159px;top:1220px"></div>
<div class="tk" style="left:1123px;top:1278px"></div>
<div class="tk" style="left:1159px;top:1278px"></div>
<div class="tk" style="left:1123px;top:1336px"></div>
<div class="tk" style="left:1159px;top:1336px"></div>
<div class="tk" style="left:1123px;top:1395px"></div>
<div class="tk" style="left:1159px;top:1395px"></div>
<div class="dca" style="left:1192px;top:473px">DCA</div>
<div class="btn" style="left:1090px;top:1464px;width:108px;height:62px;line-height:51px;font-size:26px">SOLO</div>
<div class="ln" style="left:1206px"></div>
<div class="bg" style="left:1210px;width:108px"></div>
<div class="ln" style="left:1320px"></div>
<div class="lab" style="left:1212px;width:104px;font-size:26px">Matrix 3</div>
<div class="btn" style="left:1210px;top:365px;width:108px;height:57px;line-height:48px;">M</div>
<div class="val" style="left:1210px;top:429px;width:108px;">0.0</div>
<div class="tr" style="left:1257px;top:478px;width:5px;height:934px"></div>
<div class="gr" style="left:1257px;top:989px;width:5px;height:423px"></div>
<div class="tr" style="left:1268px;top:478px;width:5px;height:934px"></div>
<div class="gr" style="left:1268px;top:989px;width:5px;height:423px"></div>
<div class="knob" style="left:1239px;top:657px;width:50px"><div class="bd" style="left:18px;width:5px"></div><div class="bd" style="left:29px;width:5px"></div><div class="kl" style="top:39px;height:6px"></div></div>
<div class="ear" style="left:1236px;top:659px"></div>
<div class="ear" style="left:1291px;top:659px"></div>
<div class="tk" style="left:1244px;top:519px"></div>
<div class="tk" style="left:1279px;top:519px"></div>
<div class="tk" style="left:1244px;top:577px"></div>
<div class="tk" style="left:1279px;top:577px"></div>
<div class="tk" style="left:1244px;top:636px"></div>
<div class="tk" style="left:1279px;top:636px"></div>
<div class="tk" style="left:1244px;top:694px"></div>
<div class="tk" style="left:1279px;top:694px"></div>
<div class="tk" style="left:1244px;top:753px"></div>
<div class="tk" style="left:1279px;top:753px"></div>
<div class="tk" style="left:1244px;top:811px"></div>
<div class="tk" style="left:1279px;top:811px"></div>
<div class="tk" style="left:1244px;top:869px"></div>
<div class="tk" style="left:1279px;top:869px"></div>
<div class="tk" style="left:1244px;top:928px"></div>
<div class="tk" style="left:1279px;top:928px"></div>
<div class="tk" style="left:1244px;top:986px"></div>
<div class="tk" style="left:1279px;top:986px"></div>
<div class="tk" style="left:1244px;top:1044px"></div>
<div class="tk" style="left:1279px;top:1044px"></div>
<div class="tk" style="left:1244px;top:1103px"></div>
<div class="tk" style="left:1279px;top:1103px"></div>
<div class="tk" style="left:1244px;top:1161px"></div>
<div class="tk" style="left:1279px;top:1161px"></div>
<div class="tk" style="left:1244px;top:1220px"></div>
<div class="tk" style="left:1279px;top:1220px"></div>
<div class="tk" style="left:1244px;top:1278px"></div>
<div class="tk" style="left:1279px;top:1278px"></div>
<div class="tk" style="left:1244px;top:1336px"></div>
<div class="tk" style="left:1279px;top:1336px"></div>
<div class="tk" style="left:1244px;top:1395px"></div>
<div class="tk" style="left:1279px;top:1395px"></div>
<div class="dca" style="left:1312px;top:473px">DCA</div>
<div class="btn" style="left:1210px;top:1464px;width:108px;height:62px;line-height:51px;font-size:26px">SOLO</div>
<div class="ln" style="left:1326px"></div>
<div class="bg" style="left:1330px;width:108px"></div>
<div class="ln" style="left:1440px"></div>
<div class="lab" style="left:1332px;width:104px;font-size:26px">Matrix 4</div>
<div class="btn" style="left:1330px;top:365px;width:108px;height:57px;line-height:48px;">M</div>
<div class="val" style="left:1330px;top:429px;width:108px;">1.7</div>
<div class="tr" style="left:1377px;top:478px;width:16px;height:934px"></div>
<div class="gr" style="left:1377px;top:923px;width:16px;height:489px"></div>
<div class="knob" style="left:1359px;top:620px;width:50px"><div class="bd" style="left:18px;width:16px"></div><div class="kl" style="top:39px;height:6px"></div></div>
<div class="ear" style="left:1356px;top:622px"></div>
<div class="ear" style="left:1411px;top:622px"></div>
<div class="tk" style="left:1364px;top:519px"></div>
<div class="tk" style="left:1399px;top:519px"></div>
<div class="tk" style="left:1364px;top:577px"></div>
<div class="tk" style="left:1399px;top:577px"></div>
<div class="tk" style="left:1364px;top:636px"></div>
<div class="tk" style="left:1399px;top:636px"></div>
<div class="tk" style="left:1364px;top:694px"></div>
<div class="tk" style="left:1399px;top:694px"></div>
<div class="tk" style="left:1364px;top:753px"></div>
<div class="tk" style="left:1399px;top:753px"></div>
<div class="tk" style="left:1364px;top:811px"></div>
<div class="tk" style="left:1399px;top:811px"></div>
<div class="tk" style="left:1364px;top:869px"></div>
<div class="tk" style="left:1399px;top:869px"></div>
<div class="tk" style="left:1364px;top:928px"></div>
<div class="tk" style="left:1399px;top:928px"></div>
<div class="tk" style="left:1364px;top:986px"></div>
<div class="tk" style="left:1399px;top:986px"></div>
<div class="tk" style="left:1364px;top:1044px"></div>
<div class="tk" style="left:1399px;top:1044px"></div>
<div class="tk" style="left:1364px;top:1103px"></div>
<div class="tk" style="left:1399px;top:1103px"></div>
<div class="tk" style="left:1364px;top:1161px"></div>
<div class="tk" style="left:1399px;top:1161px"></div>
<div class="tk" style="left:1364px;top:1220px"></div>
<div class="tk" style="left:1399px;top:1220px"></div>
<div class="tk" style="left:1364px;top:1278px"></div>
<div class="tk" style="left:1399px;top:1278px"></div>
<div class="tk" style="left:1364px;top:1336px"></div>
<div class="tk" style="left:1399px;top:1336px"></div>
<div class="tk" style="left:1364px;top:1395px"></div>
<div class="tk" style="left:1399px;top:1395px"></div>
<div class="dca" style="left:1432px;top:473px">DCA</div>
<div class="btn" style="left:1330px;top:1464px;width:108px;height:62px;line-height:51px;font-size:26px">SOLO</div>
<div style="left:1447px;top:236px;width:116px;height:1294px;border:2px solid #fff;background:#000;"></div>
<div style="left:1451px;top:240px;width:108px;height:1286px;background:#111;"></div>
<div class="lab" style="left:1453px;width:104px;font-size:26px">Matrix 5</div>
<div class="btn" style="left:1451px;top:365px;width:108px;height:57px;line-height:48px;">M</div>
<div class="val" style="left:1451px;top:429px;width:108px;">-3.7</div>
<div class="tr" style="left:1497px;top:478px;width:16px;height:934px"></div>
<div class="yl" style="left:1497px;top:889px;width:16px;height:29px"></div>
<div class="gr" style="left:1497px;top:918px;width:16px;height:494px"></div>
<div class="knob" style="left:1479px;top:738px;width:51px"><div class="bd" style="left:18px;width:16px"></div><div class="kl" style="top:40px;height:5px"></div></div>
<div class="ear" style="left:1476px;top:740px"></div>
<div class="ear" style="left:1532px;top:740px"></div>
<div class="tk" style="left:1484px;top:519px"></div>
<div class="tk" style="left:1520px;top:519px"></div>
<div class="tk" style="left:1484px;top:577px"></div>
<div class="tk" style="left:1520px;top:577px"></div>
<div class="tk" style="left:1484px;top:636px"></div>
<div class="tk" style="left:1520px;top:636px"></div>
<div class="tk" style="left:1484px;top:694px"></div>
<div class="tk" style="left:1520px;top:694px"></div>
<div class="tk" style="left:1484px;top:753px"></div>
<div class="tk" style="left:1520px;top:753px"></div>
<div class="tk" style="left:1484px;top:811px"></div>
<div class="tk" style="left:1520px;top:811px"></div>
<div class="tk" style="left:1484px;top:869px"></div>
<div class="tk" style="left:1520px;top:869px"></div>
<div class="tk" style="left:1484px;top:928px"></div>
<div class="tk" style="left:1520px;top:928px"></div>
<div class="tk" style="left:1484px;top:986px"></div>
<div class="tk" style="left:1520px;top:986px"></div>
<div class="tk" style="left:1484px;top:1044px"></div>
<div class="tk" style="left:1520px;top:1044px"></div>
<div class="tk" style="left:1484px;top:1103px"></div>
<div class="tk" style="left:1520px;top:1103px"></div>
<div class="tk" style="left:1484px;top:1161px"></div>
<div class="tk" style="left:1520px;top:1161px"></div>
<div class="tk" style="left:1484px;top:1220px"></div>
<div class="tk" style="left:1520px;top:1220px"></div>
<div class="tk" style="left:1484px;top:1278px"></div>
<div class="tk" style="left:1520px;top:1278px"></div>
<div class="tk" style="left:1484px;top:1336px"></div>
<div class="tk" style="left:1520px;top:1336px"></div>
<div class="tk" style="left:1484px;top:1395px"></div>
<div class="tk" style="left:1520px;top:1395px"></div>
<div class="dca" style="left:1553px;top:473px">DCA</div>
<div class="btn" style="left:1451px;top:1464px;width:108px;height:62px;line-height:51px;font-size:26px">SOLO</div>
<div class="ln" style="left:1567px"></div>
<div class="bg" style="left:1571px;width:108px"></div>
<div class="ln" style="left:1681px"></div>
<div class="lab" style="left:1573px;width:104px;font-size:26px">Matrix 6</div>
<div class="btn" style="left:1571px;top:365px;width:108px;height:57px;line-height:48px;">M</div>
<div class="val" style="left:1571px;top:429px;width:108px;">-144.0</div>
<div class="tr" style="left:1617px;top:478px;width:16px;height:934px"></div>
<div class="knob" style="left:1600px;top:1371px;width:50px"><div class="bd" style="left:17px;width:16px"></div><div class="kl" style="top:40px;height:5px"></div></div>
<div class="ear" style="left:1597px;top:1373px"></div>
<div class="ear" style="left:1652px;top:1373px"></div>
<div class="tk" style="left:1604px;top:519px"></div>
<div class="tk" style="left:1640px;top:519px"></div>
<div class="tk" style="left:1604px;top:577px"></div>
<div class="tk" style="left:1640px;top:577px"></div>
<div class="tk" style="left:1604px;top:636px"></div>
<div class="tk" style="left:1640px;top:636px"></div>
<div class="tk" style="left:1604px;top:694px"></div>
<div class="tk" style="left:1640px;top:694px"></div>
<div class="tk" style="left:1604px;top:753px"></div>
<div class="tk" style="left:1640px;top:753px"></div>
<div class="tk" style="left:1604px;top:811px"></div>
<div class="tk" style="left:1640px;top:811px"></div>
<div class="tk" style="left:1604px;top:869px"></div>
<div class="tk" style="left:1640px;top:869px"></div>
<div class="tk" style="left:1604px;top:928px"></div>
<div class="tk" style="left:1640px;top:928px"></div>
<div class="tk" style="left:1604px;top:986px"></div>
<div class="tk" style="left:1640px;top:986px"></div>
<div class="tk" style="left:1604px;top:1044px"></div>
<div class="tk" style="left:1640px;top:1044px"></div>
<div class="tk" style="left:1604px;top:1103px"></div>
<div class="tk" style="left:1640px;top:1103px"></div>
<div class="tk" style="left:1604px;top:1161px"></div>
<div class="tk" style="left:1640px;top:1161px"></div>
<div class="tk" style="left:1604px;top:1220px"></div>
<div class="tk" style="left:1640px;top:1220px"></div>
<div class="tk" style="left:1604px;top:1278px"></div>
<div class="tk" style="left:1640px;top:1278px"></div>
<div class="tk" style="left:1604px;top:1336px"></div>
<div class="tk" style="left:1640px;top:1336px"></div>
<div class="tk" style="left:1604px;top:1395px"></div>
<div class="tk" style="left:1640px;top:1395px"></div>
<div class="dca" style="left:1673px;top:473px">DCA</div>
<div class="btn" style="left:1571px;top:1464px;width:108px;height:62px;line-height:51px;font-size:26px">SOLO</div>
<div class="ln" style="left:1687px"></div>
<div class="bg" style="left:1691px;width:108px"></div>
<div class="ln" style="left:1801px"></div>
<div class="lab" style="left:1693px;width:104px;font-size:26px">Matrix 7</div>
<div class="btn" style="left:1691px;top:365px;width:108px;height:57px;line-height:48px;">M</div>
<div class="val" style="left:1691px;top:429px;width:108px;">-144.0</div>
<div class="tr" style="left:1738px;top:478px;width:16px;height:934px"></div>
<div class="knob" style="left:1720px;top:1371px;width:50px"><div class="bd" style="left:18px;width:16px"></div><div class="kl" style="top:40px;height:5px"></div></div>
<div class="ear" style="left:1717px;top:1373px"></div>
<div class="ear" style="left:1772px;top:1373px"></div>
<div class="tk" style="left:1725px;top:519px"></div>
<div class="tk" style="left:1760px;top:519px"></div>
<div class="tk" style="left:1725px;top:577px"></div>
<div class="tk" style="left:1760px;top:577px"></div>
<div class="tk" style="left:1725px;top:636px"></div>
<div class="tk" style="left:1760px;top:636px"></div>
<div class="tk" style="left:1725px;top:694px"></div>
<div class="tk" style="left:1760px;top:694px"></div>
<div class="tk" style="left:1725px;top:753px"></div>
<div class="tk" style="left:1760px;top:753px"></div>
<div class="tk" style="left:1725px;top:811px"></div>
<div class="tk" style="left:1760px;top:811px"></div>
<div class="tk" style="left:1725px;top:869px"></div>
<div class="tk" style="left:1760px;top:869px"></div>
<div class="tk" style="left:1725px;top:928px"></div>
<div class="tk" style="left:1760px;top:928px"></div>
<div class="tk" style="left:1725px;top:986px"></div>
<div class="tk" style="left:1760px;top:986px"></div>
<div class="tk" style="left:1725px;top:1044px"></div>
<div class="tk" style="left:1760px;top:1044px"></div>
<div class="tk" style="left:1725px;top:1103px"></div>
<div class="tk" style="left:1760px;top:1103px"></div>
<div class="tk" style="left:1725px;top:1161px"></div>
<div class="tk" style="left:1760px;top:1161px"></div>
<div class="tk" style="left:1725px;top:1220px"></div>
<div class="tk" style="left:1760px;top:1220px"></div>
<div class="tk" style="left:1725px;top:1278px"></div>
<div class="tk" style="left:1760px;top:1278px"></div>
<div class="tk" style="left:1725px;top:1336px"></div>
<div class="tk" style="left:1760px;top:1336px"></div>
<div class="tk" style="left:1725px;top:1395px"></div>
<div class="tk" style="left:1760px;top:1395px"></div>
<div class="dca" style="left:1793px;top:473px">DCA</div>
<div class="btn" style="left:1691px;top:1464px;width:108px;height:62px;line-height:51px;font-size:26px">SOLO</div>
<div class="ln" style="left:1807px"></div>
<div class="bg" style="left:1811px;width:108px"></div>
<div class="ln" style="left:1922px"></div>
<div class="lab" style="left:1813px;width:104px;font-size:26px">Matrix 8</div>
<div class="btn" style="left:1811px;top:365px;width:108px;height:57px;line-height:48px;">M</div>
<div class="val" style="left:1811px;top:429px;width:108px;">-144.0</div>
<div class="tr" style="left:1858px;top:478px;width:16px;height:934px"></div>
<div class="knob" style="left:1840px;top:1371px;width:50px"><div class="bd" style="left:18px;width:16px"></div><div class="kl" style="top:40px;height:5px"></div></div>
<div class="ear" style="left:1837px;top:1373px"></div>
<div class="ear" style="left:1892px;top:1373px"></div>
<div class="tk" style="left:1845px;top:519px"></div>
<div class="tk" style="left:1880px;top:519px"></div>
<div class="tk" style="left:1845px;top:577px"></div>
<div class="tk" style="left:1880px;top:577px"></div>
<div class="tk" style="left:1845px;top:636px"></div>
<div class="tk" style="left:1880px;top:636px"></div>
<div class="tk" style="left:1845px;top:694px"></div>
<div class="tk" style="left:1880px;top:694px"></div>
<div class="tk" style="left:1845px;top:753px"></div>
<div class="tk" style="left:1880px;top:753px"></div>
<div class="tk" style="left:1845px;top:811px"></div>
<div class="tk" style="left:1880px;top:811px"></div>
<div class="tk" style="left:1845px;top:869px"></div>
<div class="tk" style="left:1880px;top:869px"></div>
<div class="tk" style="left:1845px;top:928px"></div>
<div class="tk" style="left:1880px;top:928px"></div>
<div class="tk" style="left:1845px;top:986px"></div>
<div class="tk" style="left:1880px;top:986px"></div>
<div class="tk" style="left:1845px;top:1044px"></div>
<div class="tk" style="left:1880px;top:1044px"></div>
<div class="tk" style="left:1845px;top:1103px"></div>
<div class="tk" style="left:1880px;top:1103px"></div>
<div class="tk" style="left:1845px;top:1161px"></div>
<div class="tk" style="left:1880px;top:1161px"></div>
<div class="tk" style="left:1845px;top:1220px"></div>
<div class="tk" style="left:1880px;top:1220px"></div>
<div class="tk" style="left:1845px;top:1278px"></div>
<div class="tk" style="left:1880px;top:1278px"></div>
<div class="tk" style="left:1845px;top:1336px"></div>
<div class="tk" style="left:1880px;top:1336px"></div>
<div class="tk" style="left:1845px;top:1395px"></div>
<div class="tk" style="left:1880px;top:1395px"></div>
<div class="dca" style="left:1913px;top:473px">DCA</div>
<div class="btn" style="left:1811px;top:1464px;width:108px;height:62px;line-height:51px;font-size:26px">SOLO</div>
<div class="ln" style="left:1930px"></div>
<div class="bg" style="left:1934px;width:104px"></div>
<div class="ln" style="left:2040px"></div>
<div class="lab" style="left:1936px;width:100px;height:52px;line-height:48px">LR</div>
<div class="btn" style="left:1934px;top:304px;width:104px;height:56px;line-height:47px;">M</div>
<div class="val" style="left:1934px;top:367px;width:104px;">-4.7</div>
<div class="tr" style="left:1978px;top:414px;width:5px;height:1000px"></div>
<div class="gr" style="left:1978px;top:887px;width:5px;height:527px"></div>
<div class="tr" style="left:1988px;top:414px;width:6px;height:1000px"></div>
<div class="gr" style="left:1988px;top:887px;width:6px;height:527px"></div>
<div class="knob" style="left:1961px;top:721px;width:49px;height:80px;background-size:100% 2px,100% 5px,100% 35px,100% 14px,100% 37px,auto,auto;background-position:0 0,0 2px,0 0,0 43px,0 43px,0 -4px,0 0"><div class="bd" style="left:17px;width:5px"></div><div class="bd" style="left:27px;width:6px"></div><div class="kl" style="top:38px;height:5px"></div></div>
<div class="tk" style="left:1966px;top:460px"></div>
<div class="tk" style="left:2000px;top:460px"></div>
<div class="tk" style="left:1966px;top:522px"></div>
<div class="tk" style="left:2000px;top:522px"></div>
<div class="tk" style="left:1966px;top:585px"></div>
<div class="tk" style="left:2000px;top:585px"></div>
<div class="tk" style="left:1966px;top:648px"></div>
<div class="tk" style="left:2000px;top:648px"></div>
<div class="tk" style="left:1966px;top:710px"></div>
<div class="tk" style="left:2000px;top:710px"></div>
<div class="tk" style="left:1966px;top:772px"></div>
<div class="tk" style="left:2000px;top:772px"></div>
<div class="tk" style="left:1966px;top:835px"></div>
<div class="tk" style="left:2000px;top:835px"></div>
<div class="tk" style="left:1966px;top:898px"></div>
<div class="tk" style="left:2000px;top:898px"></div>
<div class="tk" style="left:1966px;top:960px"></div>
<div class="tk" style="left:2000px;top:960px"></div>
<div class="tk" style="left:1966px;top:1022px"></div>
<div class="tk" style="left:2000px;top:1022px"></div>
<div class="tk" style="left:1966px;top:1085px"></div>
<div class="tk" style="left:2000px;top:1085px"></div>
<div class="tk" style="left:1966px;top:1148px"></div>
<div class="tk" style="left:2000px;top:1148px"></div>
<div class="tk" style="left:1966px;top:1210px"></div>
<div class="tk" style="left:2000px;top:1210px"></div>
<div class="tk" style="left:1966px;top:1272px"></div>
<div class="tk" style="left:2000px;top:1272px"></div>
<div class="tk" style="left:1966px;top:1335px"></div>
<div class="tk" style="left:2000px;top:1335px"></div>
<div class="tk" style="left:1966px;top:1398px"></div>
<div class="tk" style="left:2000px;top:1398px"></div>
<div class="btn" style="left:1934px;top:1464px;width:104px;height:62px;line-height:51px;font-size:26px">SOLO</div>

</div>
</body></html>
